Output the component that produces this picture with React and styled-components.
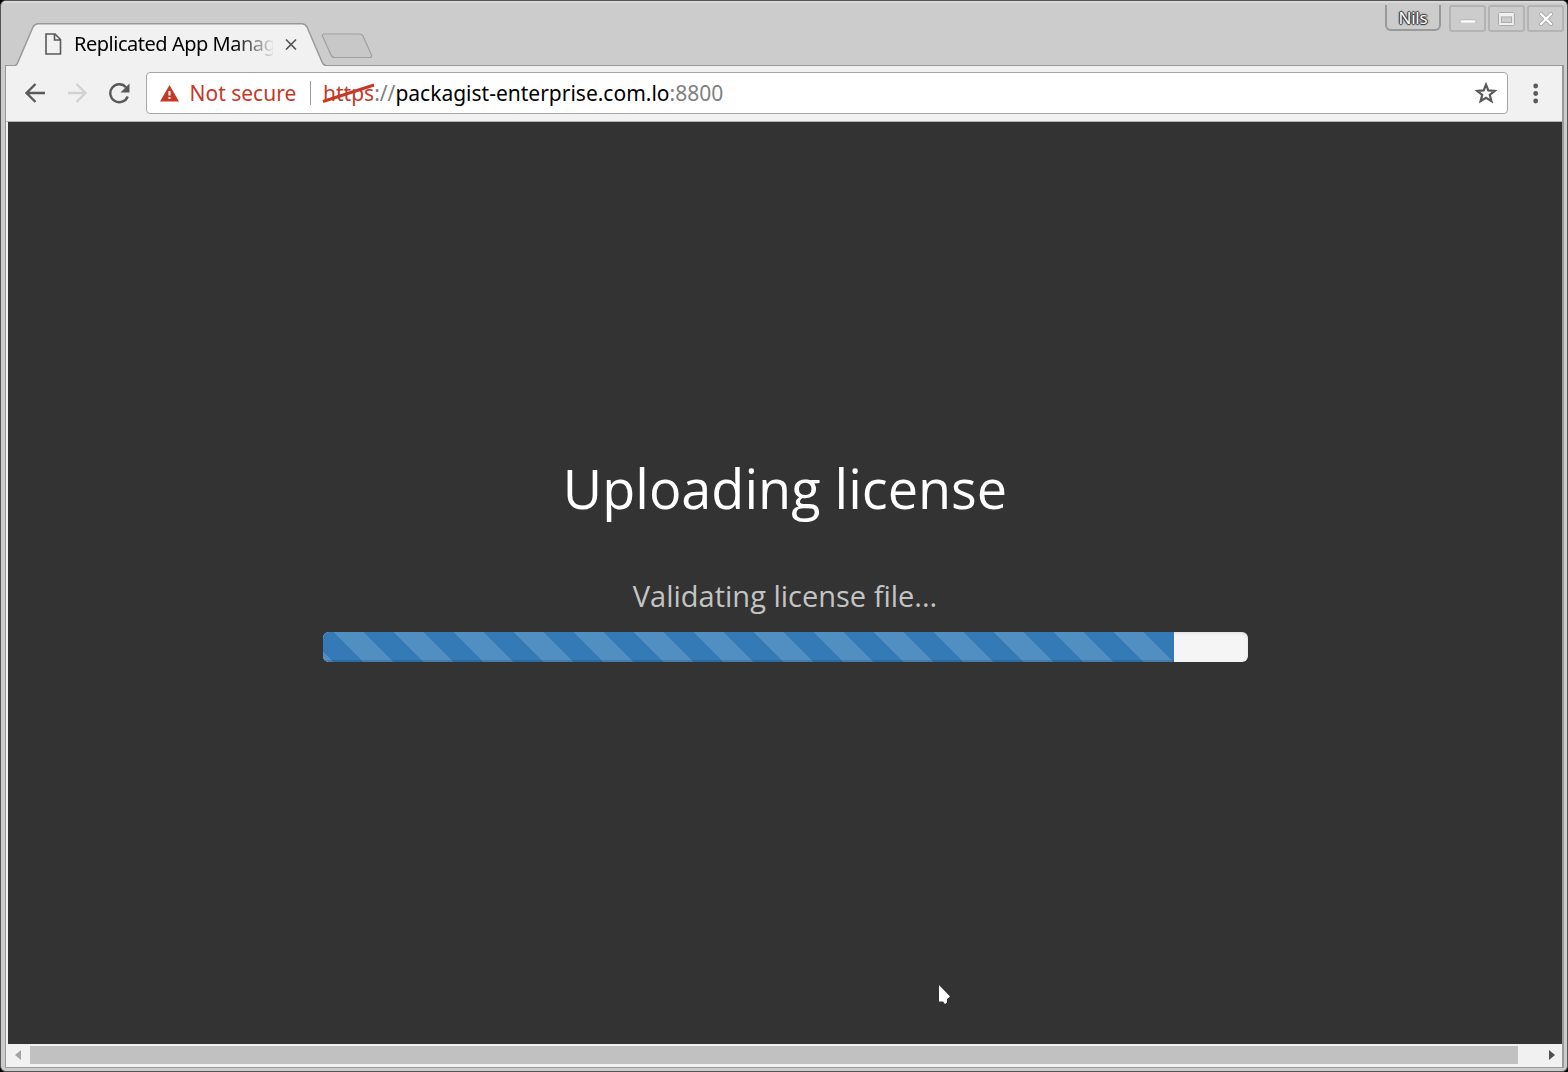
import React from 'react';
import styled, { createGlobalStyle } from 'styled-components';

const Global = createGlobalStyle`
  * { box-sizing: border-box; }
  body { margin: 0; background: #000; }
`;

const Window = styled.div`
  width: 1568px;
  height: 1072px;
  display: flex;
  flex-direction: column;
  overflow: hidden;
  background: #cccccc;
  border: 1px solid #555;
  border-radius: 6px;
  font-family: "Noto Sans", sans-serif;
`;

const TitleBar = styled.header`
  height: 64px;
  flex: none;
  display: flex;
  align-items: flex-start;
  border-top: 2px solid #d8d8d8;
  padding: 0 2px 0 14px;
`;

const Tab = styled.div`
  position: relative;
  z-index: 1;
  width: 311px;
  height: 43px;
  margin-top: 20px;
  padding: 0 0 1px 30px;
  display: flex;
  align-items: center;
`;

const TabShape = styled.svg`
  position: absolute;
  left: 0;
  top: 0;
`;

const PageIcon = styled.svg`
  position: relative;
  flex: none;
`;

const TabTitle = styled.div`
  position: relative;
  width: 199px;
  margin-left: 12px;
  overflow: hidden;
  white-space: nowrap;
  font-size: 20px;
  line-height: 30px;
  letter-spacing: -0.48px;
  color: #000;
  mask-image: linear-gradient(to right, #000 160px, transparent 201px);
`;

const TabClose = styled.svg`
  position: relative;
  margin-left: 12px;
`;

const NewTab = styled.svg`
  margin: 30px 0 0 -5.5px;
`;

const Controls = styled.div`
  margin-left: auto;
  display: flex;
  align-items: flex-start;
`;

const Profile = styled.div`
  width: 56px;
  height: 26px;
  margin: 2px 8px 0 0;
  border: 2px solid #999;
  border-top: 0;
  border-radius: 0 0 6px 6px;
  text-align: center;
  font-size: 17px;
  line-height: 26px;
  letter-spacing: -0.2px;
  color: #fff;
  text-shadow: 1px 0 1px #333, -1px 0 1px #333, 0 1px 1px #333, 0 -1px 1px #333, 0 0 2px #333;
`;

const ControlButton = styled.div`
  width: 37px;
  height: 27px;
  margin: 2px 2px 0 0;
  border: 2px solid #b3b3b3;
  border-radius: 3px;
  display: flex;
  align-items: center;
  justify-content: center;

  &:last-child {
    margin-right: 1px;
  }
`;

const Body = styled.main`
  flex: 1;
  min-height: 0;
  display: flex;
  flex-direction: column;
  margin: 0 3px 3px 4px;
  border: 1px solid #999;
  border-right-width: 2px;
  background: #f1f1f1;
`;

const Toolbar = styled.nav`
  height: 56px;
  flex: none;
  display: flex;
  align-items: center;
  border-bottom: 1px solid #b5b5b5;
  padding: 0 22px 1px 17px;
`;

const NavIcon = styled.svg`
  flex: none;
  margin-right: ${(p) => p.$gap}px;
`;

const Omnibox = styled.div`
  flex: 1;
  height: 42px;
  border: 1px solid #a6a6a6;
  border-radius: 4px;
  background: #fff;
  display: flex;
  align-items: center;
  padding: 0 10px 0 13px;
  font-size: 21px;
  line-height: 28px;
  white-space: nowrap;
`;

const Security = styled.div`
  width: 151px;
  height: 24px;
  display: flex;
  align-items: center;
  border-right: 1px solid #999;
  color: #c53929;
`;

const SecurityText = styled.span`
  margin: 0 0 1px 10.5px;
`;

const Url = styled.div`
  margin: 0 0 1px 12px;
  color: #000;
`;

const Muted = styled.span`
  color: #808080;
`;

const Scheme = styled.span`
  position: relative;
  color: #c53929;
`;

const Strike = styled.svg`
  position: absolute;
  left: -1px;
  top: 3px;
`;

const StarIcon = styled.svg`
  margin-left: auto;
`;

const MenuIcon = styled.svg`
  margin-left: 24px;
`;

const Page = styled.section`
  flex: 1;
  margin: 0 0 0 2px;
  background: #333;
  display: flex;
  flex-direction: column;
  align-items: center;
  font-family: "Open Sans", sans-serif;
`;

const Heading = styled.h1`
  margin: 327px 0 0;
  font-size: 54px;
  line-height: 78px;
  font-weight: 400;
  color: #fff;
`;

const Status = styled.p`
  margin: 49px 0 0;
  font-size: 29px;
  line-height: 40px;
  color: #c4c4c4;
`;

const Progress = styled.div`
  width: 925px;
  height: 30px;
  margin-top: 16px;
  border-radius: 6px;
  overflow: hidden;
  background: #f5f5f5;
  box-shadow: inset 0 1px 3px rgba(0, 0, 0, 0.1);
`;

const ProgressFill = styled.div`
  width: 92%;
  height: 100%;
  background-color: #337ab7;
  background-image: linear-gradient(45deg, rgba(255, 255, 255, 0.15) 25%, transparent 25%, transparent 50%, rgba(255, 255, 255, 0.15) 50%, rgba(255, 255, 255, 0.15) 75%, transparent 75%);
  background-size: 60px 60px;
  background-position: 11px 0;
  box-shadow: inset 0 -2px 0 rgba(0, 0, 0, 0.12);
`;

const ScrollTrack = styled.div`
  height: 23px;
  flex: none;
  display: flex;
  align-items: center;
  padding: 0 0 1px 9px;
`;

const ScrollThumb = styled.div`
  width: 1488px;
  height: 18px;
  margin: 0 31px 0 9px;
  background: #c1c1c1;
`;

const Pointer = styled.svg`
  position: absolute;
  left: 938px;
  top: 984px;
`;

export default function App() {
  return (
    <>
      <Global />
      <Window>
        <TitleBar>
          <Tab>
            <TabShape width="311" height="43" viewBox="0 0 311 43">
              <path d="M0 43 Q2 42 3 39 L18 4 Q20 .8 23 .8 H287 Q290 .8 292 4 L307 39 Q308 42 311 43Z" fill="#f1f1f1" />
              <path d="M0 42.500 Q2 42 3 39 L18 4 Q20 .8 23 .8 H287 Q290 .8 292 4 L307 39 Q308 42 311 42.500" fill="none" stroke="#999" strokeWidth="1.500" />
            </TabShape>
            <PageIcon width="17" height="22" viewBox="0 0 17 22" fill="none" stroke="#5a5a5a" strokeWidth="1.600">
              <path d="M1 1H10L15.500 6.500V21H1Z M9.500 1V7H15.500" />
            </PageIcon>
            <TabTitle>Replicated App Manager</TabTitle>
            <TabClose width="12" height="12" viewBox="0 0 12 12" stroke="#555" strokeWidth="1.700">
              <path d="M1 1.500L11 11.500M11 1.500L1 11.500" />
            </TabClose>
          </Tab>
          <NewTab width="52" height="26" viewBox="0 0 52 26">
            <path d="M3 1H38Q41 1 42 3L50.500 22Q51 24.500 49 24.500H14Q11 24.500 10 22L1.500 3Q1 1 3 1Z" fill="#c8c8c8" stroke="#a0a0a0" strokeWidth="1.200" />
          </NewTab>
          <Controls>
            <Profile>Nils</Profile>
            <ControlButton>
              <svg width="20" height="8" viewBox="0 0 20 8" fill="none" strokeLinecap="round"><path d="M3.500 6.500H16.500" stroke="#aaa" strokeWidth="4" /><path d="M3.500 6.500H16.500" stroke="#fff" strokeWidth="2.400" /></svg>
            </ControlButton>
            <ControlButton>
              <svg width="19" height="16" viewBox="0 0 19 16" fill="none"><rect x="3" y="3" width="13" height="10" rx="1" stroke="#aaa" strokeWidth="4" /><path d="M3 3H16V13H3ZM3 4.500H16" stroke="#f0f0f0" strokeWidth="1.800" /><rect x="4.500" y="6" width="10" height="5.500" fill="#ccc" stroke="#aaa" strokeWidth=".8" /></svg>
            </ControlButton>
            <ControlButton>
              <svg width="18" height="18" viewBox="0 0 18 18" strokeLinecap="round"><path d="M4 4L14 14M14 4L4 14" stroke="#aaa" strokeWidth="4" /><path d="M4 4L14 14M14 4L4 14" stroke="#fff" strokeWidth="2.200" /></svg>
            </ControlButton>
          </Controls>
        </TitleBar>
        <Body>
          <Toolbar>
            <NavIcon $gap={20} width="24" height="22" viewBox="0 0 24 22" fill="none" stroke="#5a5a5a" strokeWidth="2.400"><path d="M22 11H4M12.500 2L3.500 11L12.500 20" /></NavIcon>
            <NavIcon $gap={18} width="22" height="22" viewBox="0 0 22 22" fill="none" stroke="#d2d2d2" strokeWidth="2.400"><path d="M1 11H18M9.500 2L18.500 11L9.500 20" /></NavIcon>
            <NavIcon $gap={15} width="24" height="22" viewBox="0 0 24 22"><path d="M19 5.200A9 9 0 1 0 20.700 14.500" fill="none" stroke="#5a5a5a" strokeWidth="2.400" /><path d="M22.500 1.500V10.500H13.500Z" fill="#5a5a5a" /></NavIcon>
            <Omnibox>
              <Security>
                <svg width="19" height="17" viewBox="0 0 19 17"><path d="M9.500 0L19 16.500H0Z" fill="#c53929" /><path d="M9.500 6V10.500M9.500 12V14" stroke="#fff" strokeWidth="2.100" /></svg>
                <SecurityText>Not secure</SecurityText>
              </Security>
              <Url>
                <Scheme>https<Strike width="54" height="22" viewBox="0 0 54 22"><path d="M1 19.500L52 3" stroke="#c53929" strokeWidth="3" /></Strike></Scheme>
                <Muted>://</Muted>packagist-enterprise.com.lo<Muted>:8800</Muted>
              </Url>
              <StarIcon width="22" height="22" viewBox="0 0 22 22" fill="none" stroke="#5a5a5a" strokeWidth="2.200"><path d="M11 2.600L13.300 8.400L19.700 8.900L14.800 13L16.400 19.200L11 15.800L5.600 19.200L7.200 13L2.300 8.900L8.700 8.400Z" /></StarIcon>
            </Omnibox>
            <MenuIcon width="8" height="22" viewBox="0 0 8 22" fill="#5a5a5a"><circle cx="3.700" cy="4" r="2.400" /><circle cx="3.700" cy="11.500" r="2.400" /><circle cx="3.700" cy="19" r="2.400" /></MenuIcon>
          </Toolbar>
          <Page>
            <Heading>Uploading license</Heading>
            <Status>Validating license file...</Status>
            <Progress><ProgressFill /></Progress>
          </Page>
          <ScrollTrack>
            <svg width="6" height="10" viewBox="0 0 6 10"><path d="M6 0V10L0 5Z" fill="#a3a3a3" /></svg>
            <ScrollThumb />
            <svg width="6" height="10" viewBox="0 0 6 10"><path d="M0 0V10L6 5Z" fill="#505050" /></svg>
          </ScrollTrack>
        </Body>
      </Window>
      <Pointer width="13" height="22" viewBox="0 0 13 22"><path d="M1 1L12 12.500L9 15V18.500L7 20L5 17.500H1Z" fill="#fff" /></Pointer>
    </>
  );
}
